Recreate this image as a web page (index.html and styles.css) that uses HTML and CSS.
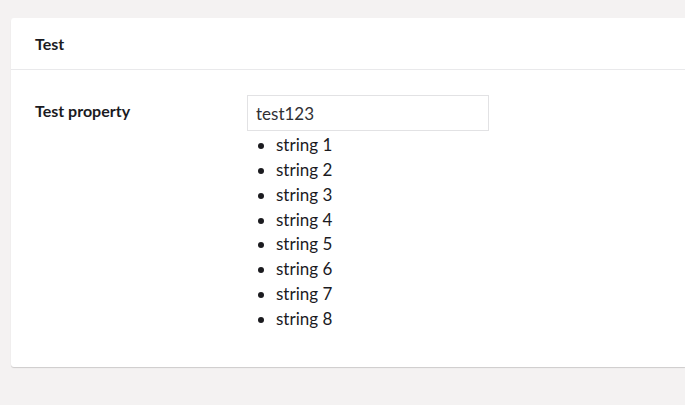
FILE: index.html
```html
<!DOCTYPE html>
<html>
<head>
<meta charset="utf-8">
<link rel="stylesheet" href="styles.css">
</head>
<body>
<div class="page">
  <div class="card">
    <div class="card-header">Test</div>
    <div class="card-body">
      <div class="property">
        <div class="label">Test property</div>
        <div class="editor">
          <input class="text-input" type="text" value="test123">
          <ul class="values">
            <li>string 1</li>
            <li>string 2</li>
            <li>string 3</li>
            <li>string 4</li>
            <li>string 5</li>
            <li>string 6</li>
            <li>string 7</li>
            <li>string 8</li>
          </ul>
        </div>
      </div>
    </div>
  </div>
</div>
</body>
</html>
```

FILE: styles.css
```css
html, body {
  margin: 0;
  padding: 0;
}
body {
  background: #f4f2f2;
  font-family: Lato, "Open Sans", sans-serif;
  color: #1b264f;
  height: 405px;
  overflow: hidden;
}
.page {
  padding: 18px 0 0 11px;
}
.card {
  background: #fff;
  border-radius: 3px 0 0 3px;
  box-shadow: 0 1px 1px rgba(0, 0, 0, 0.16);
  height: 349px;
  box-sizing: border-box;
}
.card-header {
  height: 52px;
  box-sizing: border-box;
  border-bottom: 1px solid #e9e9eb;
  padding: 0 24px 1px;
  display: flex;
  align-items: center;
  font-weight: 700;
  font-size: 16px;
  color: #1b1b1f;
}
.card-body {
  padding: 25px 24px 24px;
}
.property {
  display: flex;
}
.label {
  width: 212px;
  flex-shrink: 0;
  font-weight: 700;
  font-size: 16px;
  color: #1b1b1f;
  padding-top: 6px;
  line-height: 20px;
}
.editor {
  display: flex;
  flex-direction: column;
}
.text-input {
  width: 242px;
  height: 36px;
  box-sizing: border-box;
  border: 1px solid #e2e2e4;
  border-radius: 0;
  padding: 0 8px;
  font-family: Lato, sans-serif;
  font-size: 17px;
  color: #303033;
  background: #fff;
  margin: 0;
  outline: none;
}
.values {
  margin: 2px 0 0;
  padding: 0 0 0 29px;
  list-style: disc;
  font-size: 17px;
  line-height: 24.85px;
  color: #1b1b1f;
}
```
